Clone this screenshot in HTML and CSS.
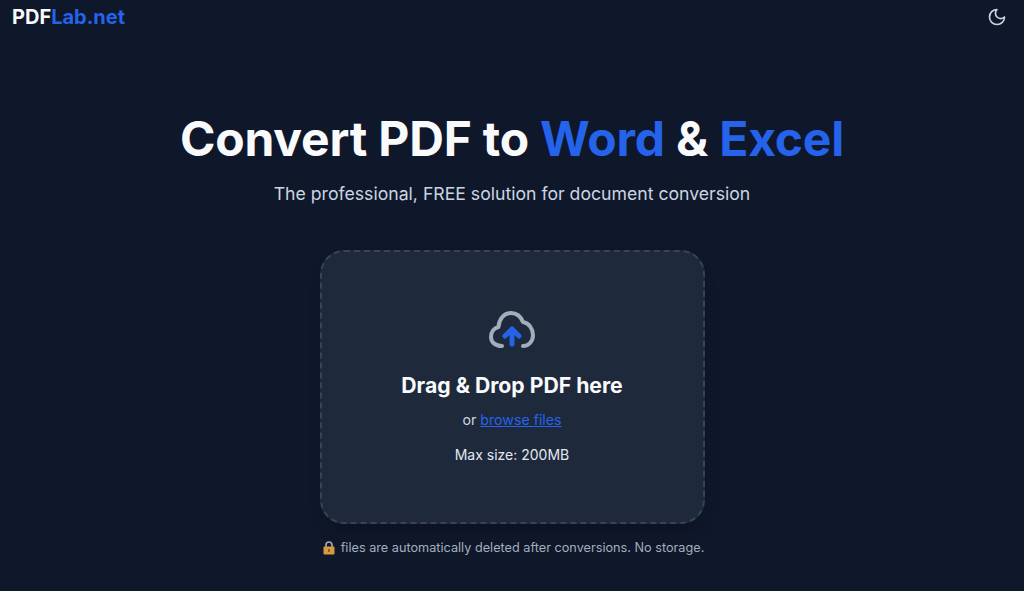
FILE: index.html
```html
<!DOCTYPE html>
<html lang="en">

<head>
    <meta charset="UTF-8" />
    <meta name="viewport" content="width=device-width, initial-scale=1.0" />
    <link rel="stylesheet" href="styles.css">
    <title>PDFLab.net</title>
</head>

<body>

    <!-- top bar -->
    <header class="topbar">
        <a class="logo" href="#">PDF<span class="blue">Lab.net</span></a>
        <button class="theme-btn" aria-label="Toggle theme">
            <svg width="20" height="20" viewBox="0 0 24 24" fill="none" stroke="currentColor" stroke-width="2"
                stroke-linecap="round" stroke-linejoin="round">
                <path d="M12 3a6 6 0 0 0 9 9 9 9 0 1 1-9-9Z" />
            </svg>
        </button>
    </header>

    <main class="hero">
        <h1 class="title">Convert PDF to <span class="blue">Word</span> &amp; <span class="blue">Excel</span></h1>
        <p class="subtitle">The professional, FREE solution for document conversion</p>

        <!-- upload box -->
        <div class="dropzone">
            <svg class="cloud" width="48" height="48" viewBox="0 0 48 48" fill="none" stroke-width="4"
                stroke-linecap="round" stroke-linejoin="round">
                <path class="cloud-line"
                    d="M14 36C7 36 3 32 3 27C3 22 6 18 10.500 17C11 9 16 3 23 3C29 3 33 7 35 12C41 13 45 19 45 25C45 31 41 36 35 36" />
                <path class="cloud-arrow" d="M24 34V20M17 26L24 19L31 26" />
            </svg>
            <h2 class="drop-title">Drag &amp; Drop PDF here</h2>
            <p class="drop-or">or <a href="#">browse files</a></p>
            <p class="drop-max">Max size: 200MB</p>
        </div>

        <p class="note">
            <svg width="12" height="14" viewBox="0 0 12 14">
                <path d="M3 6.500V4a3 3 0 0 1 6 0v2.500" fill="none" stroke="#a8adb5" stroke-width="1.600" />
                <rect x="0.500" y="5.500" width="11" height="8" rx="1" fill="#d9993f" />
                <rect x="5.200" y="8" width="1.600" height="3" fill="#7a5420" />
            </svg>
            files are automatically deleted after conversions. No storage.
        </p>
    </main>

</body>

</html>
```

FILE: styles.css
```css
:root {
    --bg: #0f172a;
    --card: #1e293b;
    --blue: #2563eb;
    --muted: #a3aebd;
}

* {
    box-sizing: border-box;
}

body {
    background-color: var(--bg);
    color: #f8fafc;
    font-family: 'Inter', sans-serif;
    margin: 0;
    height: 100vh;
    overflow: hidden;
}

p,
h1,
h2 {
    margin: 0;
}

.blue {
    color: var(--blue);
}

.topbar {
    display: flex;
    align-items: center;
    justify-content: space-between;
    height: 34px;
    padding: 0 17px 0 12px;
}

.logo {
    color: #f8fafc;
    font-size: 20px;
    font-weight: 700;
    text-decoration: none;
}

.theme-btn {
    display: flex;
    background: none;
    border: 0;
    padding: 0;
    color: #cbd5e1;
    cursor: pointer;
}

.hero {
    display: flex;
    flex-direction: column;
    align-items: center;
    padding-top: 75px;
}

.title {
    font-size: 48px;
    font-weight: 700;
    line-height: 60px;
    letter-spacing: -0.2px;
}

.subtitle {
    color: #cbd5e1;
    font-size: 17.65px;
    line-height: 28px;
    margin-top: 11px;
}

.dropzone {
    display: flex;
    flex-direction: column;
    align-items: center;
    width: 385px;
    height: 274px;
    margin-top: 42px;
    padding-top: 58px;
    background-color: var(--card);
    border: 2px dashed #364358;
    border-radius: 24px;
    box-shadow: 0 10px 15px -3px rgba(0, 0, 0, 0.2);
}

.cloud-line {
    stroke: var(--muted);
}

.cloud-arrow {
    stroke: var(--blue);
    stroke-width: 5;
}

.drop-title {
    font-size: 21.2px;
    font-weight: 700;
    line-height: 28px;
    margin-top: 13px;
}

.drop-or {
    color: #cbd5e1;
    font-size: 14.2px;
    line-height: 20px;
    margin-top: 11px;
}

.drop-or a {
    color: var(--blue);
}

.drop-max {
    color: #e2e8f0;
    font-size: 14px;
    line-height: 20px;
    margin-top: 15px;
}

.note {
    display: flex;
    align-items: center;
    gap: 6px;
    padding-left: 3px;
    color: var(--muted);
    font-size: 12.7px;
    line-height: 16px;
    margin-top: 16px;
}
```
